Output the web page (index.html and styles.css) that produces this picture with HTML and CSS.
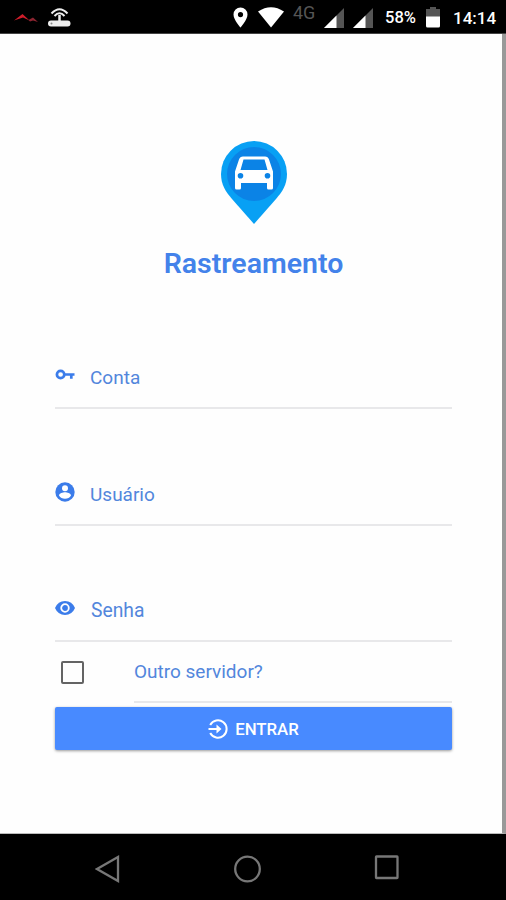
FILE: index.html
```html
<!DOCTYPE html>
<html lang="pt-BR">
<head>
<meta charset="utf-8">
<title>Rastreamento</title>
<link rel="stylesheet" href="styles.css">
</head>
<body>
<div class="phone">
  <header class="status">
    <div class="notices">
      <svg width="24" height="34" viewBox="14 0 24 34"><path fill="#cf1d2a" d="M14 20.500L22.500 14L29.500 20.500L23 17.500z"/><path fill="#8c2430" d="M28.500 20L33 17.500L38 22L33 20.500L30 21.500z"/></svg>
      <svg width="24" height="34" viewBox="48 0 24 34"><rect x="48" y="20.500" width="22.500" height="6" rx="3" fill="#eee"/><circle cx="51.500" cy="23.500" r="1" fill="#888"/><path d="M59.500 15v6" stroke="#eee" stroke-width="2.500"/><path d="M51.500 13.500Q59.500 5 67.500 13.500M54.500 16Q59.500 10.500 64.500 16" fill="none" stroke="#eee" stroke-width="2"/></svg>
    </div>
    <div class="indicators">
      <svg class="pin" width="15" height="34" viewBox="232.500 0 15 34"><path fill="#fff" fill-rule="evenodd" d="M240 7.500a7 7 0 0 0-7 7C233 20 240 27.500 240 27.500S247 20 247 14.500a7 7 0 0 0-7-7zm0 4.500a2.600 2.600 0 1 1 0 5.200a2.600 2.600 0 0 1 0-5.200z"/></svg>
      <svg class="wifi" width="26" height="34" viewBox="258 0 26 34"><path fill="#fff" d="M258 11.500Q271 3 284 11.500L271 27.500z"/></svg>
      <span class="network">4G</span>
      <svg class="signal" width="20" height="34" viewBox="0 0 20 34"><path fill="#555" d="M0 28L20 8v20z"/><path fill="#fff" d="M0 28L12.500 15.500V28z"/></svg>
      <svg class="signal second" width="20" height="34" viewBox="0 0 20 34"><path fill="#555" d="M0 28L20 8v20z"/><path fill="#fff" d="M0 28L12.500 15.500V28z"/></svg>
      <span class="percent">58%</span>
      <svg class="battery" width="14" height="34" viewBox="0 0 14 34"><path fill="#555" d="M4 7h6v2h4v8H0V9h4z"/><path fill="#fff" d="M0 16.500h14V26q0 1.500-1.500 1.500h-11Q0 27.500 0 26z"/></svg>
      <span class="clock">14:14</span>
    </div>
  </header>
  <main class="screen">
    <svg class="logo" width="68" height="86" viewBox="0 0 68 86">
      <path fill="#08a0f4" d="M34 1A33 33 0 0 0 1 34C1 45 6 52 12 59L34 84L56 59C62 52 67 45 67 34A33 33 0 0 0 34 1z"/>
      <circle cx="34" cy="34" r="27" fill="#0b83e6"/>
      <path fill="#fff" fill-rule="evenodd" d="M23 16.500h22q3 0 4 3l4 12v16.500q0 1.500-1.500 1.500h-3q-1.500 0-1.500-1.500V43H21v5q0 1.500-1.500 1.500h-3Q15 49.500 15 48V31.500l4-12q1-3 4-3zM23.500 19.500L20.500 30h27L44.500 19.500zM20.500 33a2.800 2.800 0 1 0 0 5.600a2.800 2.800 0 0 0 0-5.600zM47.500 33a2.800 2.800 0 1 0 0 5.600a2.800 2.800 0 0 0 0-5.600z"/>
    </svg>
    <h1 class="title">Rastreamento</h1>
    <form class="form">
      <label class="field">
        <svg width="20" height="20" viewBox="0 0 20 20"><path fill="none" stroke="#3b7cea" stroke-width="2.700" d="M9.300 9.500a3.700 3.700 0 1 1-7.400 0a3.700 3.700 0 1 1 7.400 0zM9.500 9.500H19.500M16.300 9.500v4.300"/></svg>
        <span>Conta</span>
      </label>
      <label class="field user">
        <svg width="20" height="20" viewBox="0 0 20 20"><circle cx="10" cy="10" r="9.700" fill="#3b7cea"/><circle cx="10" cy="6.300" r="3" fill="#fff"/><path fill="#fff" d="M4 13.500c0-2 4-3.200 6-3.200s6 1.200 6 3.200q-2 3.300-6 3.300t-6-3.300z"/></svg>
        <span>Usuário</span>
      </label>
      <label class="field password">
        <svg width="20" height="20" viewBox="0 0 20 20"><path fill="#3b7cea" d="M0 10Q3 3 10 3T20 10Q17 17 10 17T0 10z"/><circle cx="10" cy="10" r="3.800" fill="#3b7cea" stroke="#fff" stroke-width="1.800"/></svg>
        <span>Senha</span>
      </label>
      <label class="server">
        <span class="box"></span>
        <span class="option">Outro servidor?</span>
      </label>
      <button class="enter" type="button">
        <svg width="20" height="20" viewBox="0 0 20 20"><path fill="none" stroke="#fff" stroke-width="2" d="M2.200 6A8.700 8.700 0 1 1 2.200 14M.5 10H11.500"/><path fill="#fff" d="M8.500 5.500L13.500 10L8.500 14.500z"/></svg>
        <span>ENTRAR</span>
      </button>
    </form>
  </main>
  <nav class="nav">
    <svg width="26" height="30" viewBox="0 0 26 30"><path d="M2 15L23 3v24z"/></svg>
    <svg width="30" height="30" viewBox="0 0 30 30"><circle cx="14.500" cy="15" r="12.300"/></svg>
    <svg width="26" height="30" viewBox="0 0 26 30"><rect x="2" y="2.500" width="21.500" height="21.500" rx=".5"/></svg>
  </nav>
</div>
</body>
</html>
```
FILE: styles.css
```css
* { box-sizing: border-box; }
body { margin: 0; background: #000; font-family: Roboto, sans-serif; }
svg { display: block; flex: none; }
.phone { width: 506px; height: 900px; display: flex; flex-direction: column; overflow: hidden; }

.status { height: 34px; background: #000; color: #fff; display: flex; justify-content: space-between; padding: 0 10px 0 14px; border-bottom: 1px solid #444; overflow: hidden; }
.notices { display: flex; gap: 10px; }
.indicators { display: flex; white-space: nowrap; }
.indicators span { flex: none; line-height: 36px; }
.wifi { margin-left: 10px; }
.network { width: 24px; margin-left: 9px; font-size: 18px; color: #555; }
.indicators .network { line-height: 26px; }
.signal { margin-left: 7px; }
.signal.second { margin-left: 9px; }
.percent { width: 32px; margin-left: 12px; font-size: 16.500px; font-weight: 500; }
.battery { margin-left: 9px; }
.clock { width: 43px; margin-left: 13px; font-size: 17px; font-weight: 500; }

.screen { height: 800px; background: #fefefe; border-right: 4px solid #999; border-bottom: 1px solid #bbb; padding: 106px 50px 0 55px; }
.logo { margin-left: 165px; }
.title { margin: 18px 0 0; width: 397px; text-align: center; font-size: 28.500px; line-height: 40px; font-weight: 600; color: #4382ea; }
.form { width: 397px; padding-top: 59px; }
.field { display: flex; align-items: center; gap: 15px; height: 66px; padding-top: 4px; border-bottom: 2px solid #e8e8ea; font-size: 19px; color: #5286dc; }
.field svg { margin-top: -4px; }
.field.user { margin-top: 51px; }
.field.password { margin-top: 50px; }
.field.password span { font-size: 19.300px; margin-left: 1px; }
.server { display: flex; height: 61px; color: #5286dc; font-size: 19px; }
.box { width: 23px; height: 23px; margin: 19px 0 0 6px; border: 2px solid #646464; border-radius: 2px; }
.option { width: 318px; margin-left: 50px; line-height: 59px; border-bottom: 2px solid #e8e8ea; }
.enter { display: flex; align-items: center; justify-content: center; gap: 7px; width: 397px; height: 43px; margin-top: 4px; padding: 0; border: 0; border-radius: 2px; background: #488aff; box-shadow: 0 1px 3px rgba(0,0,0,.4); color: #fff; font: 500 16.800px Roboto, sans-serif; }

.nav { height: 66px; background: #000; display: flex; justify-content: space-between; padding: 20px 106px 0 95px; }
.nav svg { fill: none; stroke: #777; stroke-width: 2.300; }
```
